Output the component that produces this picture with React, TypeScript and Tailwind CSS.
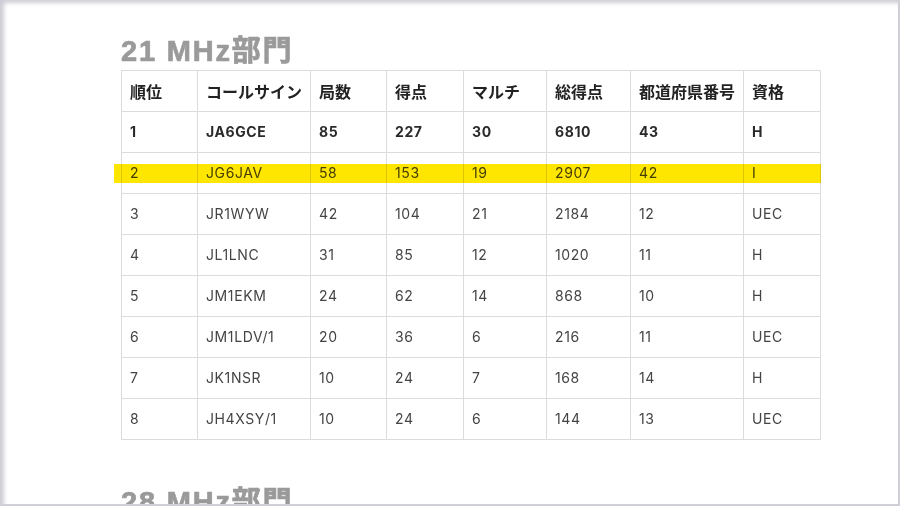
import React from "react";

type Row = string[];

const header: Row = ["順位", "コールサイン", "局数", "得点", "マルチ", "総得点", "都道府県番号", "資格"];

const rows: Row[] = [
  ["1", "JA6GCE", "85", "227", "30", "6810", "43", "H"],
  ["2", "JG6JAV", "58", "153", "19", "2907", "42", "I"],
  ["3", "JR1WYW", "42", "104", "21", "2184", "12", "UEC"],
  ["4", "JL1LNC", "31", "85", "12", "1020", "11", "H"],
  ["5", "JM1EKM", "24", "62", "14", "868", "10", "H"],
  ["6", "JM1LDV/1", "20", "36", "6", "216", "11", "UEC"],
  ["7", "JK1NSR", "10", "24", "7", "168", "14", "H"],
  ["8", "JH4XSY/1", "10", "24", "6", "144", "13", "UEC"],
];

const widths = [76, 113, 76, 77, 83, 84, 113, 77];

function Heading({ children }: { children: React.ReactNode }) {
  return (
    <h2
      className="text-[29px] leading-[29px] font-bold tracking-[1.8px] text-[#9a9a9a] [-webkit-text-stroke:0.7px_#9a9a9a]"
      style={{ fontFamily: '"Liberation Sans", "Noto Sans CJK JP", sans-serif' }}
    >
      {children}
    </h2>
  );
}

export default function App() {
  return (
    <div className="w-[900px] h-[506px] overflow-hidden bg-white border-r-2 border-b-2 border-[#cfcfd7] shadow-[inset_5px_4px_4px_-1px_#cdcdd5]">
      <div className="pl-[121px] pt-[37px]">
        {/* 21 MHz */}
        <Heading>21 MHz部門</Heading>
        <div className="relative mt-[4px] w-[700px]">
          <table
            className="w-[700px] table-fixed border-collapse text-[#444]"
            style={{ fontFamily: 'Inter, "Noto Sans CJK JP", sans-serif' }}
          >
            <colgroup>
              {widths.map((w, i) => (
                <col key={i} style={{ width: w }} />
              ))}
            </colgroup>
            <thead>
              <tr className="h-[41px]">
                {header.map((h) => (
                  <th
                    key={h}
                    className="border border-[#dcdcdc] pl-[8px] text-left align-middle text-[16px] font-bold text-[#222]"
                    style={{ fontFamily: '"Noto Sans CJK JP", sans-serif' }}
                  >
                    {h}
                  </th>
                ))}
              </tr>
            </thead>
            <tbody>
              {rows.map((r, ri) => (
                <tr key={ri} className="h-[41px]">
                  {r.map((c, ci) => (
                    <td
                      key={ci}
                      className={
                        "border border-[#dcdcdc] pl-[8px] pb-[2px] align-middle text-[14px] tracking-[0.6px] " +
                        (ri === 0 ? "font-bold text-[#2a2a2a]" : "font-normal")
                      }
                    >
                      {c}
                    </td>
                  ))}
                </tr>
              ))}
            </tbody>
          </table>
          {/* highlight marker over row 2 */}
          <div className="pointer-events-none absolute left-[-7px] right-0 top-[94px] h-[19px] bg-[#ffe600] mix-blend-multiply" />
        </div>

        {/* 28 MHz */}
        <div className="mt-[48px]">
          <Heading>28 MHz部門</Heading>
        </div>
      </div>
    </div>
  );
}
